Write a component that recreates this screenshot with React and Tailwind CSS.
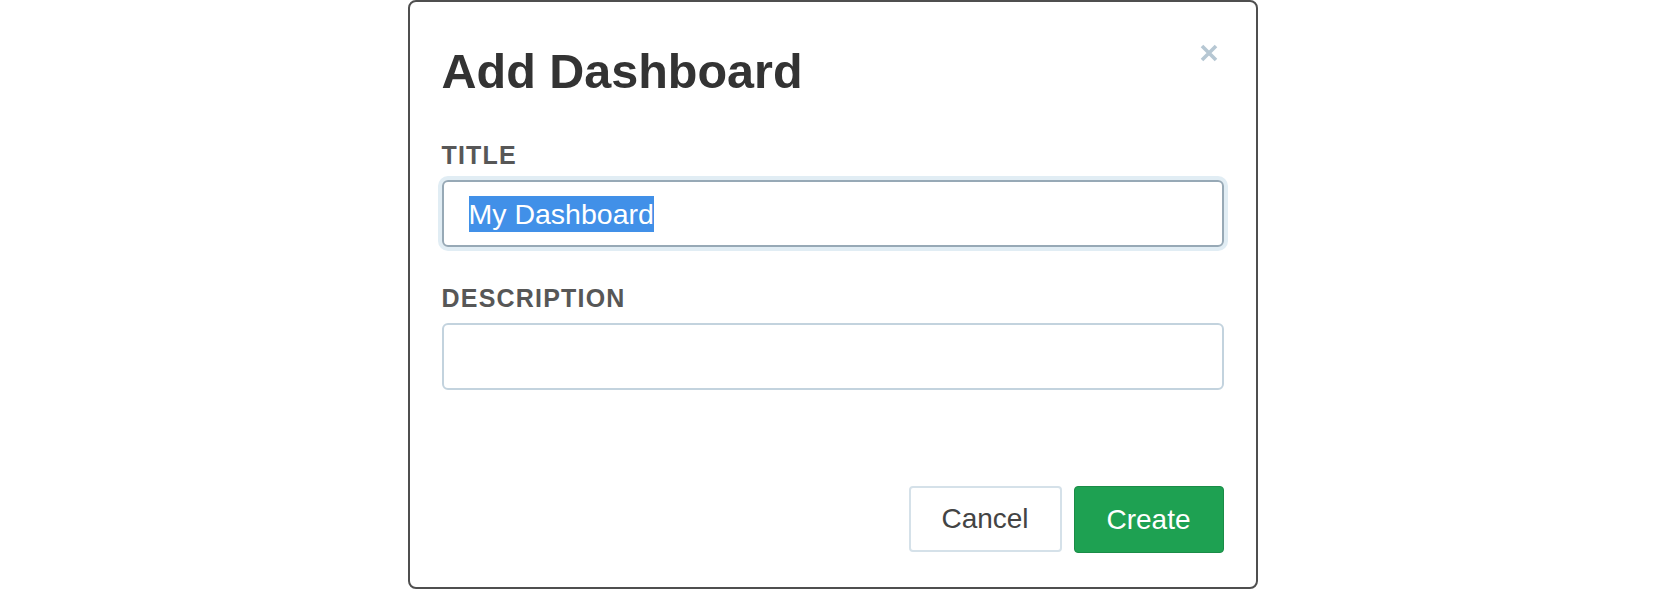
import React from 'react';

const font = { fontFamily: '"Liberation Sans", Arial, sans-serif' };

function CloseIcon() {
  return (
    <svg viewBox="0 0 20 20" className="w-5 h-5" fill="none">
      <path d="M3 3 L17 17 M17 3 L3 17" stroke="#b6c7d3" strokeWidth="3.6" strokeLinecap="butt" />
    </svg>
  );
}

export default function App() {
  return (
    <div className="w-full h-[589px] bg-white flex justify-center" style={font}>
      <div className="relative w-[850px] h-[589px] bg-white border-2 border-[#4f4f4f] rounded-[8px] px-8 pt-[45px] pb-[34px] flex flex-col">
        {/* close */}
        <button className="absolute top-[41px] right-[37px]">
          <CloseIcon />
        </button>

        <h1 className="text-[48.5px] leading-[48px] font-bold text-[#333]">Add Dashboard</h1>

        {/* Title field */}
        <label className="mt-[47px] text-[25px] leading-[26px] font-bold text-[#575757] tracking-[1.2px]">TITLE</label>
        <div className="mt-3 h-[67px] rounded-[6px] border-2 border-[#97a9b6] shadow-[0_0_0_4px_#e1edf4] flex items-center pl-[25px]">
          <span className="inline-block h-[36px] leading-[36px] text-[28.5px] bg-[#4190e8] text-white">My Dashboard</span>
        </div>

        {/* Description field */}
        <label className="mt-[38px] text-[25px] leading-[26px] font-bold text-[#575757] tracking-[1.2px]">DESCRIPTION</label>
        <div className="mt-3 h-[67px] rounded-[6px] border-2 border-[#c3d3de]"></div>

        {/* Footer */}
        <div className="mt-auto flex justify-end gap-3">
          <button className="h-[66px] w-[153px] rounded-[4px] border-2 border-[#d5e1e9] bg-white text-[28px] text-[#444]">
            Cancel
          </button>
          <button className="h-[67px] w-[150px] rounded-[4px] border border-[#1a8c47] bg-[#1ea152] text-[28px] text-white">
            Create
          </button>
        </div>
      </div>
    </div>
  );
}
